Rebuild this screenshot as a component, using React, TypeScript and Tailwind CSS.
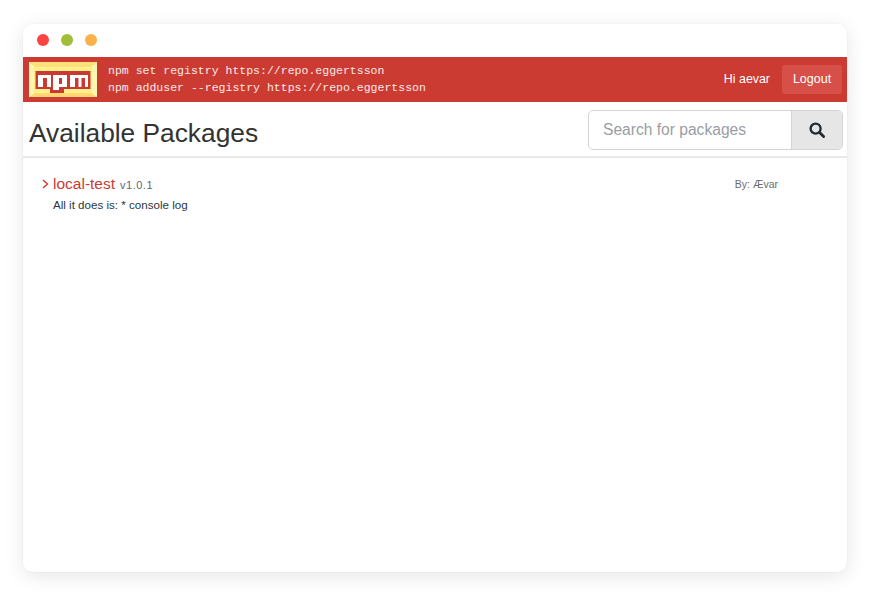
import React from "react";

function Logo() {
  return (
    <svg width="68" height="35" viewBox="0 0 68 35" className="block shrink-0">
      <rect width="68" height="35" fill="#fff08c" />
      <path d="M0 0H68L62 5H6Z" fill="#ffdf78" />
      <path d="M0 35H68L62 31H6Z" fill="#ffd873" />
      <path d="M0 0L5 5V31L0 35Z" fill="#fff7b0" />
      <path d="M68 0L63 5V31L68 35Z" fill="#fff7b0" />
      <path d="M6.5 9H61.5V27H35V31H21V27H6.5Z" fill="#cb3a32" />
      <path d="M9 13H22V25H18V16H14V25H9Z" fill="#fff" />
      <path d="M24 13H38V25H30V28H24ZM30 16V22H33V16Z" fill="#fff" fillRule="evenodd" />
      <path d="M41 13H59V25H56V16H52.5V25H49.5V16H46V25H41Z" fill="#fff" />
    </svg>
  );
}

function SearchIcon() {
  return (
    <svg width="16" height="16" viewBox="0 0 16 16" fill="none" stroke="#222b33" className="block">
      <circle cx="6.6" cy="6.6" r="5" strokeWidth="2.4" />
      <path d="M10.6 10.6L14.6 14.6" strokeWidth="2.8" strokeLinecap="round" />
    </svg>
  );
}

export default function App() {
  return (
    <div className="w-[870px] h-[595px] bg-white pt-[24px] pl-[23px] font-['Liberation_Sans',sans-serif]">
      <div className="w-[824px] h-[548px] bg-white rounded-[10px] overflow-hidden shadow-[0_0_0_1px_rgba(0,0,0,0.015),0_4px_20px_rgba(0,0,0,0.1)]">
        <div className="h-[33px] flex items-center gap-[12px] pl-[14px] pb-[1px]">
          <span className="w-[12px] h-[12px] rounded-full bg-[#fc4242]" />
          <span className="w-[12px] h-[12px] rounded-full bg-[#a0bf36]" />
          <span className="w-[12px] h-[12px] rounded-full bg-[#f9b249]" />
        </div>
        <div className="h-[45px] bg-[#cb3b32] flex items-center pl-[6px] pr-[5px]">
          <Logo />
          <div className="ml-[11px] mb-[1px] font-['Liberation_Mono',monospace] text-[11.52px] leading-[17px] text-[#fbe9e7] whitespace-pre">
            <div>npm set registry https://repo.eggertsson</div>
            <div>npm adduser --registry https://repo.eggertsson</div>
          </div>
          <div className="ml-auto flex items-center">
            <span className="text-[12.4px] text-white mr-[12px] mb-[1px]">Hi aevar</span>
            <button className="w-[60px] h-[29px] mb-[1px] bg-[#d64f48] rounded-[3px] text-[12.5px] text-white">Logout</button>
          </div>
        </div>
        <div className="h-[56px] flex justify-between pl-[6px] pr-[4px] border-b-2 border-[#e8e8e8]">
          <h1 className="mt-[14px] text-[26.3px] font-normal text-[#333333] leading-[34px]">Available Packages</h1>
          <div className="mt-[8px] flex w-[255px] h-[40px] border border-[#d4d4d4] rounded-[5px] overflow-hidden">
            <div className="flex-1 flex items-center pl-[14px] text-[15.6px] text-[#999ea3]">Search for packages</div>
            <div className="w-[51px] bg-[#e6e6e6] border-l border-[#d4d4d4] flex items-center justify-center">
              <SearchIcon />
            </div>
          </div>
        </div>
        <div className="flex justify-between pl-[19px] pr-[69px] pt-[17px]">
          <div>
            <div className="flex items-baseline">
              <span className="w-[11px]">
                <svg width="7" height="10" viewBox="0 0 7 10" fill="none" stroke="#cb3b32" strokeWidth="1.4">
                  <path d="M1 1L5.5 5L1 9" />
                </svg>
              </span>
              <span className="text-[15.5px] text-[#cb3b32] leading-[18px]">local-test</span>
              <span className="ml-[5px] text-[11px] text-[#5d6670] tracking-[0.5px]">v1.0.1</span>
            </div>
            <div className="ml-[11px] mt-[4px] text-[11.6px] leading-[14px] text-[#2a3644]">All it does is: * console log</div>
          </div>
          <div className="text-[10.5px] text-[#6b6b6b] leading-[18px]">By: Ævar</div>
        </div>
      </div>
    </div>
  );
}
